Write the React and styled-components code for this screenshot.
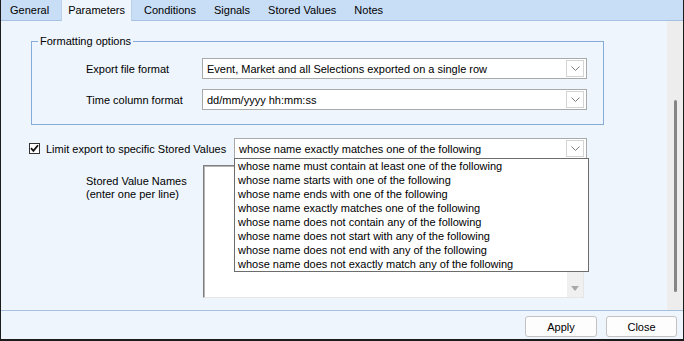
import React from "react";
import styled, { createGlobalStyle } from "styled-components";

const Global = createGlobalStyle`
  html, body { margin: 0; padding: 0; background: #ffffff; }
  * { box-sizing: border-box; }
`;

const Window = styled.div`
  width: 684px;
  height: 341px;
  border-left: 1px solid #1c1c1c;
  border-right: 1px solid #1c1c1c;
  border-bottom: 2px solid #1c1c1c;
  background: #eef5fd;
  display: flex;
  flex-direction: column;
  font-family: "Liberation Sans", Arial, sans-serif;
  font-size: 11px;
  color: #000;
  overflow: hidden;
`;

const TabStrip = styled.div`
  height: 21px;
  flex: none;
  display: flex;
  align-items: stretch;
  background: #c8ddf6;
  border-bottom: 1px solid #a4c0e2;
  padding-left: 0;
`;

const Tab = styled.div`
  display: flex;
  align-items: center;
  padding: ${(p) => (p.$active ? "0 6px 1px" : "0 9px 1px")};
  margin: ${(p) => (p.$active ? "0 3px -1px" : "0")};
  background: ${(p) => (p.$active ? "#eef5fd" : "transparent")};
  border-left: ${(p) => (p.$active ? "1px solid #bcd0ea" : "none")};
  border-right: ${(p) => (p.$active ? "1px solid #bcd0ea" : "none")};
  white-space: nowrap;
`;

const Body = styled.div`
  flex: 1;
  min-height: 0;
  display: flex;
`;

const Panel = styled.div`
  flex: 1;
  padding-top: 14px;
`;

const PageScroll = styled.div`
  width: 16px;
  flex: none;
  background: #ededed;
  display: flex;
  flex-direction: column;
  align-items: center;
  padding-top: 79px;
`;

const Thumb = styled.div`
  width: 3px;
  height: 192px;
  border-radius: 2px;
  background: #858585;
  margin-left: 1px;
`;

const Group = styled.fieldset`
  margin: 0 0 0 30px;
  width: 573px;
  padding: 0;
  border: 1px solid #85acd9;
`;

const Legend = styled.legend`
  margin-left: 6px;
  padding: 0 2px;
  line-height: 13px;
`;

const FormGrid = styled.div`
  display: grid;
  grid-template-columns: 116px 385px;
  row-gap: 10px;
  align-items: center;
  padding: 10px 0 14px 54px;
`;

const Select = styled.div`
  position: relative;
  width: ${(p) => p.$w}px;
  height: 21px;
  border: 1px solid #a9a9a9;
  background: #fff;
  display: flex;
  align-items: center;
  padding-left: 4px;
  white-space: nowrap;
`;

const SelectText = styled.span`
  flex: 1;
`;

const DropButton = styled.span`
  width: 18px;
  height: 17px;
  margin-right: 2px;
  border: 1px solid #d4d4d4;
  display: flex;
  align-items: center;
  justify-content: center;
  background: #fff;
`;

const Chevron = () => (
  <svg width="9" height="5" viewBox="0 0 9 5">
    <path d="M0.5 0.5 L4.5 4.5 L8.5 0.5" fill="none" stroke="#7c7c7c" strokeWidth="1" />
  </svg>
);

const CheckRow = styled.div`
  display: flex;
  align-items: center;
  margin-top: 13px;
  padding-left: 28px;
`;

const CheckBox = styled.span`
  width: 11px;
  height: 11px;
  border: 1px solid #333;
  background: #fff;
  margin-right: 6px;
  display: flex;
  align-items: center;
  justify-content: center;
`;

const CheckLabel = styled.span`
  width: 188px;
  white-space: nowrap;
`;

const DropList = styled.div`
  position: absolute;
  top: 100%;
  left: -1px;
  width: 355px;
  background: #fff;
  border: 1px solid #6d6d6d;
  z-index: 5;
`;

const DropItem = styled.div`
  height: 14px;
  line-height: 14px;
  padding-left: 3px;
`;

const NamesRow = styled.div`
  display: grid;
  grid-template-columns: 117px 381px;
  margin-top: 6px;
  padding-left: 85px;
`;

const NamesLabel = styled.div`
  padding-top: 10px;
  line-height: 13px;
`;

const NamesBox = styled.div`
  height: 133px;
  background: #fff;
  border: 1px solid;
  border-color: #7f7f7f #e6e6e6 #e6e6e6 #7f7f7f;
  box-shadow: inset 1px 1px 0 #b5b5b5;
  display: flex;
  justify-content: flex-end;
`;

const BoxScroll = styled.div`
  width: 16px;
  margin: 1px 0 0 0;
  background: #f0f0f0;
  display: flex;
  flex-direction: column;
  justify-content: flex-end;
  align-items: center;
  padding-bottom: 6px;
`;

const Footer = styled.div`
  flex: none;
  height: 29px;
  border-top: 1px solid #a6c0de;
  display: flex;
  justify-content: flex-end;
  gap: 9px;
  padding: 5px 6px 0 0;
`;

const Button = styled.button`
  width: ${(p) => p.$w}px;
  height: 21px;
  border: 1px solid #c2c2c2;
  border-radius: 3px;
  background: #fdfdfd;
  font-family: inherit;
  font-size: 11px;
  color: #000;
  padding: 0;
`;

const tabs = ["General", "Parameters", "Conditions", "Signals", "Stored Values", "Notes"];

const options = [
  "whose name must contain at least one of the following",
  "whose name starts with one of the following",
  "whose name ends with one of the following",
  "whose name exactly matches one of the following",
  "whose name does not contain any of the following",
  "whose name does not start with any of the following",
  "whose name does not end with any of the following",
  "whose name does not exactly match any of the following",
];

export default function App() {
  return (
    <>
      <Global />
      <Window>
        <TabStrip>
          {tabs.map((t) => (
            <Tab key={t} $active={t === "Parameters"}>
              {t}
            </Tab>
          ))}
        </TabStrip>
        <Body>
          <Panel>
            <Group>
              <Legend>Formatting options</Legend>
              <FormGrid>
                <span>Export file format</span>
                <Select $w={385}>
                  <SelectText>Event, Market and all Selections exported on a single row</SelectText>
                  <DropButton>
                    <Chevron />
                  </DropButton>
                </Select>
                <span>Time column format</span>
                <Select $w={385}>
                  <SelectText>dd/mm/yyyy hh:mm:ss</SelectText>
                  <DropButton>
                    <Chevron />
                  </DropButton>
                </Select>
              </FormGrid>
            </Group>
            <CheckRow>
              <CheckBox>
                <svg width="9" height="9" viewBox="0 0 9 9">
                  <path d="M1 4.2 L3.4 6.8 L8 1.2" fill="none" stroke="#111" strokeWidth="1.8" />
                </svg>
              </CheckBox>
              <CheckLabel>Limit export to specific Stored Values</CheckLabel>
              <Select $w={353}>
                <SelectText>whose name exactly matches one of the following</SelectText>
                <DropButton>
                  <Chevron />
                </DropButton>
                <DropList>
                  {options.map((o) => (
                    <DropItem key={o}>{o}</DropItem>
                  ))}
                </DropList>
              </Select>
            </CheckRow>
            <NamesRow>
              <NamesLabel>
                Stored Value Names
                <br />
                (enter one per line)
              </NamesLabel>
              <NamesBox>
                <BoxScroll>
                  <svg width="8" height="5" viewBox="0 0 8 5">
                    <path d="M0 0 H8 L4 5 Z" fill="#a8a8a8" />
                  </svg>
                </BoxScroll>
              </NamesBox>
            </NamesRow>
          </Panel>
          <PageScroll>
            <Thumb />
          </PageScroll>
        </Body>
        <Footer>
          <Button $w={72}>Apply</Button>
          <Button $w={71}>Close</Button>
        </Footer>
      </Window>
    </>
  );
}
